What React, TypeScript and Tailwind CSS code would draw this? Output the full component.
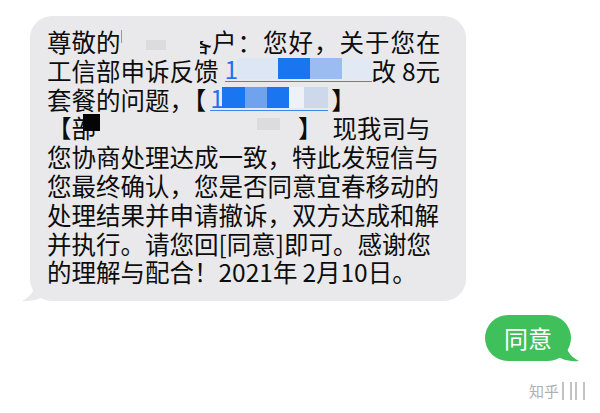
import React from 'react';

const cjk = { fontFamily: '"Noto Sans CJK SC", "Noto Sans", sans-serif' };

// redacted phone-number link, drawn as blurred colour blocks
function Redacted({ blocks, className }: { blocks: [number, string][]; className?: string }) {
  return (
    <span className={`inline-flex h-[25px] items-center align-top border-b-[1.5px] border-[#3c86ee] text-[#1d74ee] ${className ?? ''}`}>
      <span className="w-[12px] leading-[21px]">1</span>
      {blocks.map(([w, c], i) => (
        <span key={i} className="h-[21px]" style={{ width: w, background: c }} />
      ))}
    </span>
  );
}

export default function App() {
  return (
    <div className="w-[600px] h-[413px] overflow-hidden bg-white" style={cjk}>
      {/* incoming bubble */}
      <div className="relative ml-[30px] mt-[16px] w-[436px] h-[285px] rounded-[22px] bg-[#e9e9eb] pl-[17px] pt-[12px] text-[24.5px] leading-[28.8px] text-[#0d0d0d]">
        <svg className="absolute left-[-8px] bottom-[-1px]" width="26" height="24" viewBox="0 0 26 24">
          <path d="M14 0 C14 10 10 18 0 23 C8 24 17 22 24 17 L26 0 Z" fill="#e9e9eb" />
        </svg>

        <div className="whitespace-nowrap">
          尊敬的
          <span className="inline-flex w-[67px] h-[28px] align-top items-end gap-[24px] pb-[6px]">
            <span className="self-start mt-[2px] w-[1.5px] h-[13px] bg-[#9a9a9a]" />
            <span className="w-[20px] h-[10px] bg-[#dcdcde]" />
          </span>
          <span className="relative inline-block">
            客
            <span className="absolute left-0 top-0 w-[12px] h-[28px] bg-[#e9e9eb]" />
            <span className="absolute left-0 top-0 w-[25px] h-[13px] bg-[#e9e9eb]" />
          </span>
          <span className="tracking-[1px]">户：您好，关于您在</span>
        </div>

        <div className="whitespace-nowrap">
          工信部申诉反馈
          <Redacted
            className="ml-[6px]"
            blocks={[[41, '#dde6f4'], [32, '#1a76f0'], [32, '#9bbcf0'], [30, '#e1e9f5']]}
          />
          改<span className="ml-[6px]">8</span>元
        </div>

        <div className="whitespace-nowrap">
          套餐的问题，【
          <Redacted
            className="ml-[4px]"
            blocks={[[23, '#1a76f0'], [22, '#6fa3ee'], [22, '#1a76f0'], [15, '#eef1f7'], [24, '#cdd8ea']]}
          />
          <span className="ml-[3px]">】</span>
        </div>

        <div className="relative whitespace-nowrap">
          【部
          <span className="absolute left-[36px] top-0 w-[17px] h-[17px] bg-[#050505]" />
          <span className="inline-flex w-[202px] h-[28px] align-top justify-end items-start pt-[4px] pr-[18px]">
            <span className="w-[23px] h-[12px] bg-[#dcdcde]" />
          </span>
          】<span className="ml-[10px]">现我司与</span>
        </div>

        <div className="whitespace-nowrap">您协商处理达成一致，特此发短信与</div>
        <div className="whitespace-nowrap">您最终确认，您是否同意宜春移动的</div>
        <div className="whitespace-nowrap">处理结果并申请撤诉，双方达成和解</div>
        <div className="whitespace-nowrap">并执行。请您回[同意]即可。感谢您</div>
        <div className="whitespace-nowrap">
          的理解与配合！2021年<span className="ml-[5px]">2</span>月10日。
        </div>
      </div>

      {/* outgoing bubble */}
      <div className="flex justify-end mt-[14px] pr-[29px]">
        <div className="relative w-[86px] h-[46px] rounded-[23px] bg-[#3fc05b] flex items-center justify-center text-[24px] text-white">
          <span className="relative z-10">同意</span>
          <svg className="absolute right-[-8px] bottom-[-1px]" width="26" height="24" viewBox="0 0 26 24">
            <path d="M12 0 C12 10 16 18 26 23 C18 24 9 22 2 17 L0 0 Z" fill="#3fc05b" />
          </svg>
        </div>
      </div>

      {/* watermark */}
      <div className="flex justify-end items-center mt-[20px] pr-[15px] gap-[3px]">
        <span className="text-[15px] leading-[20px] text-[#b0b0b0]">知乎</span>
        <span className="w-[10px] h-[18px] border-x-2 border-[#c2c2c2]" />
        <span className="w-[10px] h-[18px] border-x-2 border-[#c2c2c2]" />
      </div>
    </div>
  );
}
